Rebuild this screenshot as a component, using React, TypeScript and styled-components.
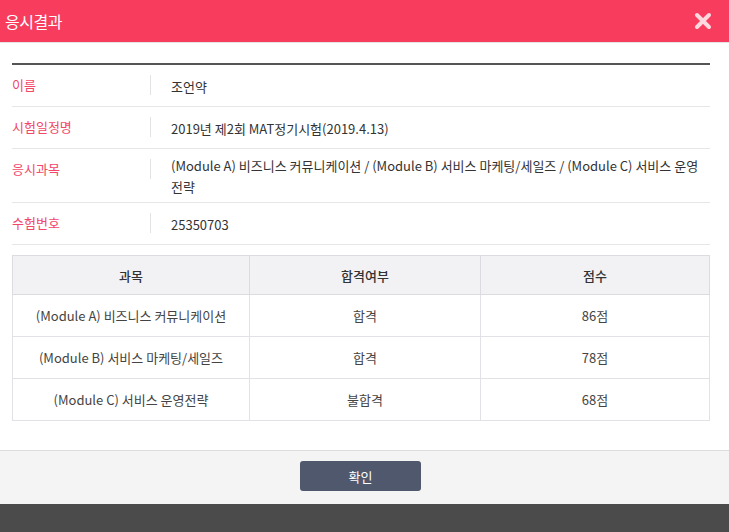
import React from 'react';
import styled, { createGlobalStyle } from 'styled-components';

const GlobalStyle = createGlobalStyle`
  html, body {
    margin: 0;
    padding: 0;
    background: #4b4b4b;
  }
  body {
    font-family: 'Noto Sans CJK KR', 'Noto Sans', sans-serif;
    color: #333;
  }
`;

const Modal = styled.div`
  width: 729px;
  background: #fff;
  box-shadow: 0 4px 8px rgba(0, 0, 0, 0.45);
`;

const Header = styled.div`
  height: 42px;
  background: #f73c5e;
  border-bottom: 1px solid #e4e4e4;
  display: flex;
  align-items: center;
  justify-content: space-between;
  padding: 0 17px 0 5px;
`;

const Title = styled.h1`
  margin: 0;
  font-size: 16px;
  font-weight: 400;
  color: #fff;
  letter-spacing: -0.5px;
`;

const CloseButton = styled.button`
  border: 0;
  background: none;
  padding: 0;
  width: 18px;
  height: 18px;
  display: flex;
  cursor: pointer;
`;

const Body = styled.div`
  padding: 20px 19px 29px 12px;
`;

const InfoList = styled.dl`
  margin: 0;
  border-top: 2px solid #555;
`;

const InfoRow = styled.div`
  display: flex;
  align-items: center;
  border-bottom: 1px solid #e6e6e6;
  min-height: 41px;
`;

const Label = styled.dt`
  align-self: flex-start;
  width: 138px;
  flex: none;
  margin: 10px 0 0;
  font-size: 13px;
  line-height: 20px;
  height: 20px;
  color: #f2476a;
  border-right: 1px solid #e3e3e3;
`;

const Value = styled.dd`
  margin: 0;
  padding: 6px 8px 5px 20px;
  font-size: 13px;
  line-height: 21px;
  color: #333;
`;

const ScoreTable = styled.table`
  width: 100%;
  margin-top: 10px;
  border-collapse: collapse;
  table-layout: fixed;
  font-size: 13px;
`;

const HeadCell = styled.th<{ $w?: number }>`
  ${({ $w }) => ($w ? `width: ${$w}px;` : '')}
  height: 38px;
  background: #f2f2f4;
  border: 1px solid #dcdce0;
  font-weight: 500;
  color: #333;
  padding: 0;
`;

const Cell = styled.td`
  height: 41px;
  border: 1px solid #e2e2e6;
  text-align: center;
  color: #444;
  padding: 0;
`;

const Footer = styled.div`
  border-top: 1px solid #dcdcdc;
  background: #f4f4f4;
  height: 54px;
  box-sizing: border-box;
  padding: 10px 8px 0 0;
  display: flex;
  justify-content: center;
  align-items: flex-start;
`;

const ConfirmButton = styled.button`
  width: 121px;
  height: 30px;
  background: #4f586d;
  border: 0;
  border-radius: 3px;
  color: #fff;
  font-family: inherit;
  font-size: 13px;
  cursor: pointer;
`;

const INFO = [
  { label: '이름', value: '조언약' },
  { label: '시험일정명', value: '2019년 제2회 MAT정기시험(2019.4.13)' },
  {
    label: '응시과목',
    value:
      '(Module A) 비즈니스 커뮤니케이션 / (Module B) 서비스 마케팅/세일즈 / (Module C) 서비스 운영전략',
  },
  { label: '수험번호', value: '25350703' },
];

const SCORES = [
  { subject: '(Module A) 비즈니스 커뮤니케이션', result: '합격', score: '86점' },
  { subject: '(Module B) 서비스 마케팅/세일즈', result: '합격', score: '78점' },
  { subject: '(Module C) 서비스 운영전략', result: '불합격', score: '68점' },
];

export default function App() {
  return (
    <>
      <GlobalStyle />
      <Modal>
        <Header>
          <Title>응시결과</Title>
          <CloseButton aria-label="닫기">
            <svg width="18" height="18" viewBox="0 0 18 18">
              <path
                d="M3 3 L15 15 M15 3 L3 15"
                stroke="#fdd9df"
                strokeWidth="4"
                strokeLinecap="round"
              />
            </svg>
          </CloseButton>
        </Header>
        <Body>
          <InfoList>
            {INFO.map((item) => (
              <InfoRow key={item.label}>
                <Label>{item.label}</Label>
                <Value>{item.value}</Value>
              </InfoRow>
            ))}
          </InfoList>
          <ScoreTable>
            <thead>
              <tr>
                <HeadCell $w={236}>과목</HeadCell>
                <HeadCell $w={230}>합격여부</HeadCell>
                <HeadCell>점수</HeadCell>
              </tr>
            </thead>
            <tbody>
              {SCORES.map((row) => (
                <tr key={row.subject}>
                  <Cell>{row.subject}</Cell>
                  <Cell>{row.result}</Cell>
                  <Cell>{row.score}</Cell>
                </tr>
              ))}
            </tbody>
          </ScoreTable>
        </Body>
        <Footer>
          <ConfirmButton>확인</ConfirmButton>
        </Footer>
      </Modal>
    </>
  );
}
